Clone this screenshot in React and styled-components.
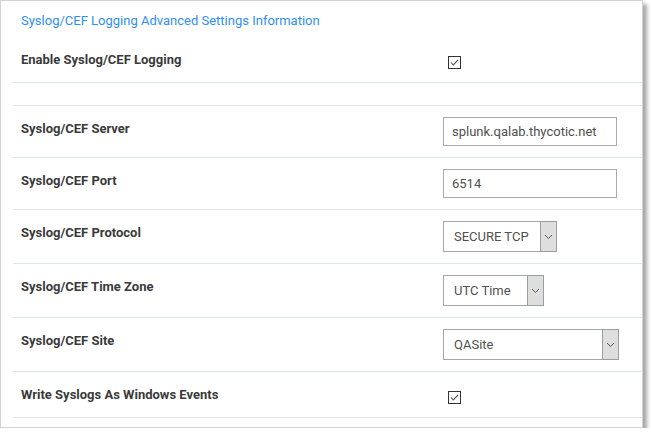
import styled, { createGlobalStyle } from 'styled-components'

const GlobalStyle = createGlobalStyle`
  body {
    margin: 0;
    background: #ffffff;
    font-family: Roboto, "Liberation Sans", Arial, sans-serif;
  }
`

const rows = [
  { label: 'Syslog/CEF Server', type: 'input', value: 'splunk.qalab.thycotic.net' },
  { label: 'Syslog/CEF Port', type: 'input', value: '6514' },
  { label: 'Syslog/CEF Protocol', type: 'select', value: 'SECURE TCP', width: 114 },
  { label: 'Syslog/CEF Time Zone', type: 'select', value: 'UTC Time', width: 101 },
  { label: 'Syslog/CEF Site', type: 'select', value: 'QASite', width: 176 },
]

const Chevron = () => (
  <svg width="9" height="6" viewBox="0 0 9 6">
    <path d="M1 1 L4.5 4.5 L8 1" fill="none" stroke="#555" strokeWidth="1" />
  </svg>
)

const CheckBox = () => (
  <Check>
    <svg width="11" height="11" viewBox="0 0 11 11">
      <path d="M2 5.5 L4.3 8 L9 3" fill="none" stroke="#555" strokeWidth="1.1" />
    </svg>
  </Check>
)

const App = () => {
  return (<>
    <GlobalStyle />
    <Panel>
      <Title>Syslog/CEF Logging Advanced Settings Information</Title>

      <Rows>
        <Row $check>
          <Label $check>Enable Syslog/CEF Logging</Label>
          <Control $check><CheckBox /></Control>
        </Row>

        <Row $empty />

        {rows.map(row => (
          <Row key={row.label}>
            <Label>{row.label}</Label>
            <Control>
              {row.type === 'input'
                ? <TextInput readOnly value={row.value} />
                : (
                  <Select $width={row.width}>
                    <span className="value">{row.value}</span>
                    <span className="arrow"><Chevron /></span>
                  </Select>
                )}
            </Control>
          </Row>
        ))}

        <Row $check>
          <Label $check>Write Syslogs As Windows Events</Label>
          <Control $check><CheckBox /></Control>
        </Row>
      </Rows>
    </Panel>
  </>)
}

const Panel = styled.div`
  box-sizing: border-box;
  width: 643px;
  height: 428px;
  background: #ffffff;
  border: 1px solid #d2d2d2;
  box-shadow: 4px 4px 4px rgba(0, 0, 0, 0.35);
`

const Title = styled.div`
  padding: 12px 0 8px 20px;
  font-size: 13px;
  line-height: 16px;
  color: #2f8ff0;
`

const Rows = styled.div`
  margin-left: 12px;
`

const Row = styled.div`
  display: grid;
  grid-template-columns: 430px 1fr;
  border-bottom: 1px solid #dfe5e5;
  height: ${p => (p.$empty ? '22px' : 'auto')};
  min-height: ${p => (p.$check ? '45px' : '0')};
`

const Label = styled.div`
  padding: 15px 0 0 8px;
  font-size: 13px;
  line-height: 16px;
  font-weight: 700;
  color: #3a3a3a;
`

const Control = styled.div`
  padding: ${p => (p.$check ? '19px 0 0 5px' : '11px 0 11px 0')};
`

const Check = styled.span`
  box-sizing: border-box;
  display: flex;
  align-items: center;
  justify-content: center;
  width: 13px;
  height: 13px;
  border: 1px solid #333;
  background: #fff;
`

const TextInput = styled.input`
  box-sizing: border-box;
  display: block;
  width: 174px;
  height: 29px;
  padding: 0 8px;
  border: 1px solid #a7abaf;
  border-radius: 0;
  outline: none;
  font-family: Roboto, "Liberation Sans", Arial, sans-serif;
  font-size: 13px;
  color: #505050;
  background: #fff;
`

const Select = styled.div`
  box-sizing: border-box;
  display: flex;
  width: ${p => p.$width}px;
  height: 31px;
  border: 1px solid #a3a7ab;
  background: #fff;

  .value {
    flex: 1;
    display: flex;
    align-items: center;
    padding-left: 10px;
    font-size: 13px;
    color: #505050;
  }

  .arrow {
    box-sizing: border-box;
    width: 17px;
    display: flex;
    align-items: center;
    justify-content: center;
    background: #dedede;
    border: 1px solid #9a9ea2;
    margin: -1px -1px -1px 0;
  }
`

export default App
